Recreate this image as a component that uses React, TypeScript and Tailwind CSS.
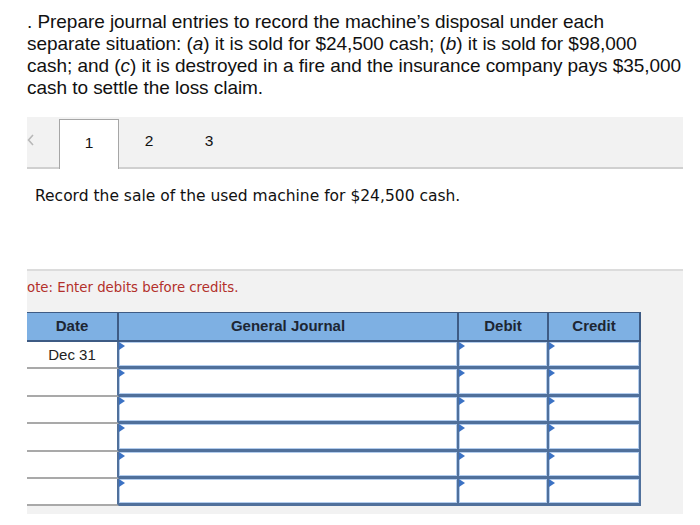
import React from 'react'

const rowHeights = [27, 28, 27, 28, 27, 27]

function Marker() {
  return (
    <span className="absolute left-0 top-0 h-0 w-0 border-y-[4px] border-l-[6px] border-y-transparent border-l-[#3b72c4]" />
  )
}

function InputCell() {
  return (
    <div className="relative border-b-[3px] border-r-[2px] border-[#50709b] bg-white shadow-[inset_0_0_0_1px_#b3cdee]">
      <Marker />
    </div>
  )
}

export default function App() {
  return (
    <div className="h-[525px] w-[700px] overflow-hidden bg-white text-[#1b1b1b]">
      <p
        className="pl-[27px] pt-[11px] text-[19px] leading-[22px] text-[#111]"
        style={{ fontFamily: '"Liberation Sans", Arial, sans-serif', letterSpacing: '-0.05px' }}
      >
        . Prepare journal entries to record the machine’s disposal under each
        <br />
        separate situation: (<i>a</i>) it is sold for $24,500 cash; (<i>b</i>) it is sold for $98,000
        <br />
        cash; and (<i>c</i>) it is destroyed in a fire and the insurance company pays $35,000
        <br />
        cash to settle the loss claim.
      </p>

      <div className="ml-[27px] mt-[18px] flex h-[52px] w-[656px] items-end border-b-2 border-[#d0d0d0] bg-[#f2f2f2] font-['Liberation_Sans',Arial,sans-serif] text-[15.5px] text-[#111]">
        <div className="mb-[21px] w-[32px]">
          <svg width="7" height="12" viewBox="0 0 7 12" fill="none">
            <path d="M6 1 L1.5 6 L6 11" stroke="#b8b8b8" strokeWidth="1.6" />
          </svg>
        </div>
        <div className="-mb-[2px] flex h-[50px] w-[60px] items-center justify-center border border-b-0 border-[#a6a6a6] bg-white pb-[4px]">
          1
        </div>
        <div className="flex h-[48px] w-[60px] items-center justify-center pb-[4px]">2</div>
        <div className="flex h-[48px] w-[60px] items-center justify-center pb-[4px]">3</div>
      </div>

      <p className="ml-[35px] mt-[16px] font-['DejaVu_Sans',Verdana,sans-serif] text-[15.5px] leading-[22px] text-[#111]">
        Record the sale of the used machine for $24,500 cash.
      </p>

      <div className="ml-[27px] mt-[62px] h-[245px] w-[656px] border-t-2 border-[#dcdcdc] bg-[#f2f2f2]">
        <p className="pt-[8px] font-['DejaVu_Sans',Verdana,sans-serif] text-[13.3px] leading-[18px] text-[#b3302b]">
          ote: Enter debits before credits.
        </p>

        <div className="mt-[15px] w-[614px] font-['Liberation_Sans',Arial,sans-serif] text-[15px]">
          <div className="grid h-[30px] grid-cols-[92px_340px_90px_92px] border-y-2 border-t-[1px] border-[#3e5b84] bg-[#7eb0e3] font-bold text-[#1d2633]">
            <div className="flex items-center justify-center border-r-2 border-[#3e5b84]">Date</div>
            <div className="flex items-center justify-center border-r-2 border-[#3e5b84]">General Journal</div>
            <div className="flex items-center justify-center border-r-2 border-[#3e5b84]">Debit</div>
            <div className="flex items-center justify-center border-r-2 border-[#3e5b84]">Credit</div>
          </div>
          {rowHeights.map((h, i) => (
            <div
              key={i}
              className="grid grid-cols-[92px_340px_90px_92px]"
              style={{ height: h }}
            >
              <div className="flex items-center justify-center border-b-2 border-r-2 border-[#a9a9a9] border-r-[#50709b] bg-white pt-[2px] text-[#222]">
                {i === 0 ? 'Dec 31' : ''}
              </div>
              <InputCell />
              <InputCell />
              <InputCell />
            </div>
          ))}
        </div>
      </div>
    </div>
  )
}
